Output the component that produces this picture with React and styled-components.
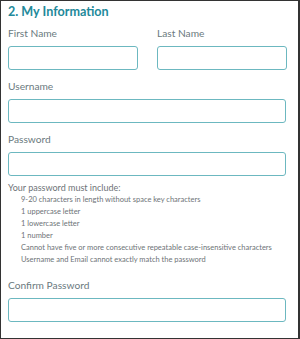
import React from "react"
import styled, { createGlobalStyle } from "styled-components"

const Global = createGlobalStyle`
    html, body {
        margin: 0;
        padding: 0;
        background: #ffffff;
    }
    * {
        box-sizing: border-box;
    }
`

const Panel = styled.section`
    width: 300px;
    height: 339px;
    border: 1px solid #333333;
    border-right-width: 2px;
    padding: 3px 12px 0 7px;
    font-family: "Lato", "Open Sans", sans-serif;
    background: #ffffff;
`

const Title = styled.h2`
    margin: 0 0 7px;
    font-size: 12.6px;
    line-height: 16px;
    font-weight: 700;
    color: #22899a;
`

const NameRow = styled.div`
    display: grid;
    grid-template-columns: 130px 130px;
    column-gap: 19px;
`

const Field = styled.div`
    display: flex;
    flex-direction: column;
    margin-top: ${p => p.$top || 0}px;
`

const Label = styled.label`
    font-size: 10.2px;
    line-height: 12px;
    color: #6b7a80;
    margin-bottom: ${p => p.$gap || 7}px;
`

const Input = styled.input`
    height: 24px;
    width: 100%;
    border: 1.6px solid #6cb8c0;
    border-radius: 3px;
    background: #ffffff;
    outline: none;
    padding: 0 6px;
`

const Rules = styled.div`
    margin-top: 6px;
    color: #6e7377;
`

const RulesTitle = styled.div`
    font-size: 9px;
    line-height: 12px;
`

const RuleList = styled.ul`
    list-style: none;
    margin: 0;
    padding: 0 0 0 13px;
`

const Rule = styled.li`
    font-size: 7.5px;
    line-height: 12px;
`

const rules = [
    "9-20 characters in length without space key characters",
    "1 uppercase letter",
    "1 lowercase letter",
    "1 number",
    "Cannot have five or more consecutive repeatable case-insensitive characters",
    "Username and Email cannot exactly match the password",
]

export default function App() {
    return (
        <>
            <Global />
            <Panel>
                <Title>2. My Information</Title>
                <NameRow>
                    <Field>
                        <Label>First Name</Label>
                        <Input />
                    </Field>
                    <Field>
                        <Label>Last Name</Label>
                        <Input />
                    </Field>
                </NameRow>
                <Field $top={10}>
                    <Label>Username</Label>
                    <Input />
                </Field>
                <Field $top={10}>
                    <Label $gap={7}>Password</Label>
                    <Input />
                </Field>
                <Rules>
                    <RulesTitle>Your password must include:</RulesTitle>
                    <RuleList>
                        {rules.map(r => <Rule key={r}>{r}</Rule>)}
                    </RuleList>
                </Rules>
                <Field $top={13}>
                    <Label $gap={7}>Confirm Password</Label>
                    <Input />
                </Field>
            </Panel>
        </>
    )
}
